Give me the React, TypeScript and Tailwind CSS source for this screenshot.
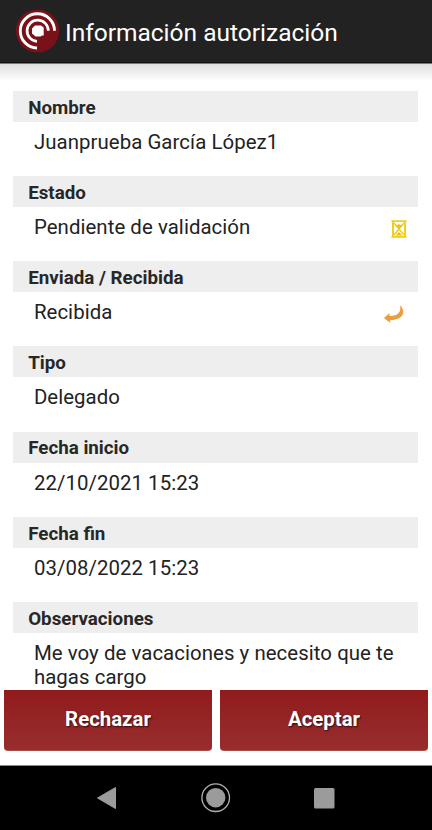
import type { ReactNode } from "react";

function Logo() {
  return (
    <svg className="h-[44px] w-[44px] shrink-0" viewBox="0 0 44 44" fill="none">
      <circle cx="22.500" cy="22" r="21.600" fill="#7b1118" />
      <path d="M22 39A17.100 17.100 0 1 1 39.500 21.800" stroke="#fff" strokeWidth="2.900" />
      <path d="M22 32.300A10.600 10.600 0 1 1 33.300 21.800" stroke="#fff" strokeWidth="2.700" />
      <path d="M20 16.500h6l2.700 2v8h-1.700l-1.500 1h-5l-3.500-3v-5z" fill="#fff" />
    </svg>
  );
}

function Hourglass() {
  return (
    <svg className="h-[18px] w-[16px]" viewBox="0 0 16 18" fill="none" stroke="#f0cd1c">
      <path d="M0.500 1.200h15M0.500 16.800h15" strokeWidth="1.800" />
      <path d="M2 2v14M14 2v14" strokeWidth="1.900" />
      <path d="M3 3l10 12M13 3l-10 12" strokeWidth="1.500" />
      <path d="M4.500 4.500l2 .8 1.500-1.300 1.500 1.300 2-.8L8 9zM4.500 15.500l3.500-3.500 3.500 3.500z" fill="#e8c20c" stroke="none" />
    </svg>
  );
}

function ReturnArrow() {
  return (
    <svg className="h-[18px] w-[20px]" viewBox="0 0 20 18" fill="#ee9c3e">
      <path d="M15.800 0.300C21.800 5 21 14.800 6 15.300L6.300 18L0 13L5.300 8.300L5.700 11C13 11 18 7.500 15.800 0.300z" />
    </svg>
  );
}

function Field({ label, value, icon }: { label: string; value: string; icon?: ReactNode }) {
  return (
    <section className="mb-[30.200px] h-[55px] shrink-0">
      <h2 className="flex h-[31px] items-center bg-[#eeeeee] pl-[14.800px] text-[18.750px] font-bold text-[#272727]">
        <span className="mt-[3px]">{label}</span>
      </h2>
      <div className="flex justify-between pt-[8px] pl-[20.500px]">
        <p className="w-[366px] text-[20.400px] leading-[24px] tracking-[0.060px] text-[#222]">{value}</p>
        {icon}
      </div>
    </section>
  );
}

function ActionButton({ label }: { label: string }) {
  return (
    <button className="h-[61px] flex-1 rounded-b-[4px] border-b border-[#a94b4b] bg-linear-to-b from-[#911a1c] to-[#982d2e] pb-[1px] text-[20.400px] font-bold text-white [text-shadow:1px_1px_2px_rgba(0,0,0,0.7)]">
      {label}
    </button>
  );
}

export default function App() {
  return (
    <div className="flex h-[830px] w-[432px] flex-col overflow-hidden bg-white font-['Roboto',sans-serif]">
      <header className="flex h-[63px] shrink-0 items-center border-b border-[#111] bg-[#222] pl-[15px]">
        <Logo />
        <h1 className="mt-[5px] ml-[6px] text-[24.500px] text-white">Información autorización</h1>
      </header>
      <div className="h-[18px] shrink-0 border-t border-[#777] bg-linear-to-b from-[#dedede] to-white" />
      <main className="flex h-[607px] shrink-0 flex-col overflow-hidden pt-[9.800px] pr-[13.600px] pl-[13.400px]">
        <Field label="Nombre" value="Juanprueba García López1" />
        <Field label="Estado" value="Pendiente de validación" icon={<div className="mt-[5px] mr-[11.500px]"><Hourglass /></div>} />
        <Field label="Enviada / Recibida" value="Recibida" icon={<div className="mt-[5px] mr-[14.500px]"><ReturnArrow /></div>} />
        <Field label="Tipo" value="Delegado" />
        <Field label="Fecha inicio" value="22/10/2021 15:23" />
        <Field label="Fecha fin" value="03/08/2022 15:23" />
        <Field label="Observaciones" value="Me voy de vacaciones y necesito que te hagas cargo" />
      </main>
      <div className="flex h-[78px] shrink-0 gap-[8px] border-b border-[#888] px-[4px] pt-[2px]">
        <ActionButton label="Rechazar" />
        <ActionButton label="Aceptar" />
      </div>
      <nav className="h-[64px] shrink-0 bg-black">
        <svg className="h-[64px] w-[432px]" viewBox="0 766 432 64" fill="#9b9b9b">
          <path d="M97.500 798L115.500 787.500V808.500z" stroke="#9b9b9b" strokeLinejoin="round" />
          <circle cx="215.700" cy="797.700" r="9.700" />
          <circle cx="215.700" cy="797.700" r="13.800" fill="none" stroke="#b0b0b0" strokeWidth="1.300" />
          <rect x="314" y="788" width="20.500" height="20.500" rx="1.500" />
        </svg>
      </nav>
    </div>
  );
}
